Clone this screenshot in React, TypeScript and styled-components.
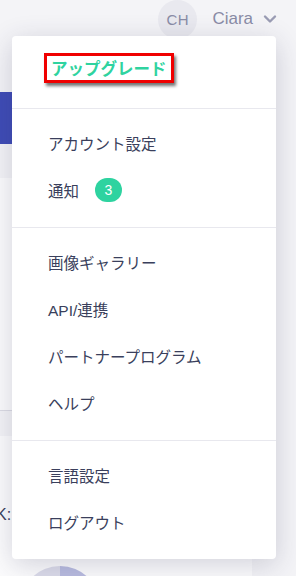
import React from "react";
import styled, { createGlobalStyle } from "styled-components";

const GlobalStyle = createGlobalStyle`
    html, body {
        margin: 0;
        padding: 0;
        background-color: #f4f4f7;
        font-family: "Liberation Sans", "Noto Sans CJK JP", sans-serif;
    }
`;

const Page = styled.div`
    width: 296px;
    height: 576px;
    position: relative;
    overflow: hidden;
    background-color: #f4f4f7;
`;

const Header = styled.header`
    height: 38px;
    display: flex;
    justify-content: flex-end;
    align-items: center;
    padding-right: 19px;
    gap: 15px;
`;

const Avatar = styled.div`
    width: 39px;
    height: 39px;
    border-radius: 50%;
    background-color: #e9e9ef;
    color: #8a8ca6;
    font-family: "Liberation Sans", Arial, sans-serif;
    font-size: 15px;
    letter-spacing: 0.5px;
    display: flex;
    justify-content: center;
    align-items: center;
`;

const UserName = styled.div`
    display: flex;
    align-items: center;
    gap: 10px;
    color: #8a8ca6;
    font-family: "Liberation Sans", Arial, sans-serif;
    font-size: 17px;
`;

const Body = styled.div`
    display: flex;
    flex-direction: column;
`;

const Banner = styled.div`
    width: 160px;
    height: 52px;
    margin-top: 54px;
    background-color: #3f4cb6;
`;

const Card = styled.div<{ $height: number; $gap: number }>`
    width: 252px;
    height: ${(p) => p.$height}px;
    margin-top: ${(p) => p.$gap}px;
    background-color: #fcfcfd;
    border-bottom: 1px solid #dcdce4;
    overflow: hidden;
`;

const CardLabel = styled.div`
    padding-top: 70px;
    margin-left: -4px;
    font-family: "Liberation Sans", Arial, sans-serif;
    font-size: 16px;
    color: #3a3f5c;
`;

const Pie = styled.div`
    width: 80px;
    height: 80px;
    margin: 42px 0 0 20px;
    border-radius: 50%;
    background: linear-gradient(90deg, #dcdcea 50%, #b9bce0 50%);
`;

const Menu = styled.nav`
    position: absolute;
    left: 12px;
    top: 36px;
    width: 264px;
    background-color: #ffffff;
    border-radius: 4px;
    box-shadow: 0 6px 28px rgba(40, 40, 80, 0.2);
    font-size: 15.5px;
    color: #3a3f5c;
`;

const Section = styled.div<{ $pad?: string }>`
    padding: ${(p) => p.$pad || "10px 0 14px"};
    border-top: 1px solid #e8e8ee;

    &:first-child {
        border-top: none;
    }
`;

const Item = styled.div`
    height: 47px;
    display: flex;
    align-items: center;
    padding-left: 36px;
    gap: 16px;
`;

const Upgrade = styled.div`
    height: 72px;
    display: flex;
    align-items: flex-start;
    padding: 17px 0 0 32px;
    box-sizing: border-box;
`;

const Highlight = styled.span`
    border: 3px solid #f00000;
    box-shadow: 2px 3px 3px rgba(0, 0, 0, 0.55);
    padding: 1px 4px;
    color: #2fd39f;
    font-family: "Noto Sans CJK JP", sans-serif;
    font-weight: 700;
    font-size: 16.5px;
    line-height: 22px;
`;

const Badge = styled.span`
    width: 27px;
    height: 24px;
    border-radius: 12px;
    background-color: #2ed3a0;
    color: #ffffff;
    font-family: "Liberation Sans", Arial, sans-serif;
    font-size: 14px;
    display: flex;
    justify-content: center;
    align-items: center;
`;

const menuGroups: string[][] = [
    ["アカウント設定", "通知"],
    ["画像ギャラリー", "API/連携", "パートナープログラム", "ヘルプ"],
    ["言語設定", "ログアウト"],
];

function App() {
    return (
        <Page>
            <GlobalStyle />
            <Header>
                <Avatar>CH</Avatar>
                <UserName>
                    Ciara
                    <svg width="14" height="10" viewBox="0 0 14 10" fill="none">
                        <path d="M2 2.5 L7 7.5 L12 2.5" stroke="#9a9cb4" strokeWidth="2.4" strokeLinecap="round" strokeLinejoin="round" />
                    </svg>
                </UserName>
            </Header>

            <Body>
                <Banner />
                <Card $height={232} $gap={34} />
                <Card $height={200} $gap={25}>
                    <CardLabel>K:</CardLabel>
                    <Pie />
                </Card>
            </Body>

            <Menu>
                <Section $pad="0">
                    <Upgrade>
                        <Highlight>アップグレード</Highlight>
                    </Upgrade>
                </Section>
                {menuGroups.map((group, i) => (
                    <Section key={i}>
                        {group.map((label) => (
                            <Item key={label}>
                                {label}
                                {label === "通知" && <Badge>3</Badge>}
                            </Item>
                        ))}
                    </Section>
                ))}
            </Menu>
        </Page>
    );
}

export default App;
